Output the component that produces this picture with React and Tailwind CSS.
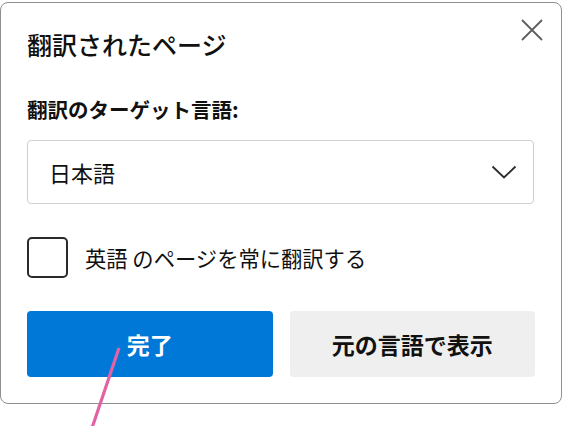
import React from "react";

const font = { fontFamily: '"Noto Sans CJK JP", "Noto Sans", sans-serif' };

export default function App() {
  return (
    <div className="relative w-[562px] h-[426px] bg-white" style={font}>
      <div className="pt-[2px]">
        <div className="relative w-[562px] h-[402px] border border-[#8f8f8f] rounded-[8px] bg-white px-[26px] pt-[25px] flex flex-col">
          <button className="absolute top-[15px] right-[17px] w-[24px] h-[24px] flex items-center justify-center">
            <svg width="22" height="22" viewBox="0 0 22 22">
              <path d="M1 1 L21 21 M21 1 L1 21" stroke="#5f5f5f" strokeWidth="1.8" fill="none" />
            </svg>
          </button>
          <div className="text-[25px] leading-[32px] font-medium text-[#111]">翻訳されたページ</div>
          <div className="mt-[35px] text-[20.5px] leading-[28px] font-semibold text-[#111]">翻訳のターゲット言語:</div>
          <div className="mt-[17px] h-[64px] w-[507px] border border-[#cfcfcf] rounded-[4px] flex items-center justify-between pl-[21px] pr-[16px]">
            <span className="text-[22px] text-[#111]">日本語</span>
            <svg width="26" height="14" viewBox="0 0 26 14">
              <path d="M1.5 1.5 L13 12.5 L24.5 1.5" stroke="#2b2b2b" strokeWidth="1.8" fill="none" />
            </svg>
          </div>
          <div className="mt-[33px] flex items-center gap-[17px]">
            <div className="w-[41px] h-[41px] border-2 border-[#2a2a2a] rounded-[5px]" />
            <span className="text-[21.3px] text-[#111]">英語 のページを常に翻訳する</span>
          </div>
          <div className="mt-[33px] flex gap-[17px]">
            <button className="w-[246px] h-[66px] rounded-[4px] bg-[#0078d7] text-white text-[23px] font-semibold">完了</button>
            <button className="w-[246px] h-[66px] rounded-[4px] bg-[#efefef] text-[#111] text-[23px] font-semibold">元の言語で表示</button>
          </div>
        </div>
      </div>
      <svg className="absolute left-0 top-0 pointer-events-none" width="562" height="426">
        <line x1="119" y1="348" x2="92" y2="428" stroke="#e263a4" strokeWidth="3.2" />
      </svg>
    </div>
  );
}
